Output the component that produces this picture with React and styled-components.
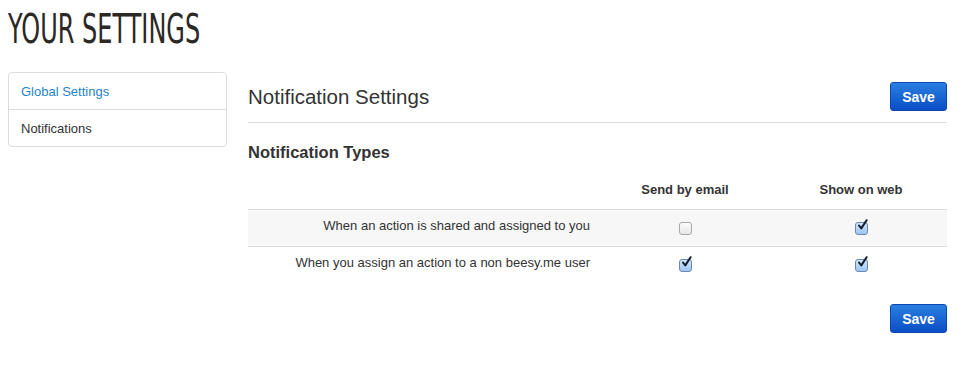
import styled, { createGlobalStyle } from 'styled-components';

const COLORS = {
  text: '#333',
  link: '#1f84c8',
  border: '#dcdcdc',
  rowBg: '#f7f7f7',
  btnTop: '#2a7fe0',
  btnBottom: '#0b4ec5'
};

const GlobalStyle = createGlobalStyle`
  body {
    margin: 0;
    background: #fff;
    font-family: 'Liberation Sans', Arial, sans-serif;
    color: ${COLORS.text};
  }
`;

const ROWS = [
  { label: 'When an action is shared and assigned to you', email: false, web: true },
  { label: 'When you assign an action to a non beesy.me user', email: true, web: true }
];

function Checkbox({ checked }) {
  return (
    <Box checked={checked}>
      {checked && (
        <svg width="13" height="13" viewBox="0 0 13 13">
          <path
            d="M3 6.5 L5.3 9.4 L10.6 1.2"
            fill="none"
            stroke="#111a2e"
            strokeWidth="2"
            strokeLinecap="round"
            strokeLinejoin="round"
          />
        </svg>
      )}
    </Box>
  );
}

export default function App() {
  return (
    <Page>
      <GlobalStyle />
      <PageTitle>YOUR SETTINGS</PageTitle>
      <Layout>
        <Sidebar>
          <SideItem active>Global Settings</SideItem>
          <SideItem>Notifications</SideItem>
        </Sidebar>

        <Main>
          <Header>
            <SectionTitle>Notification Settings</SectionTitle>
            <SaveButton>Save</SaveButton>
          </Header>

          <SubTitle>Notification Types</SubTitle>

          <Table>
            <HeadRow>
              <span />
              <HeadCell>Send by email</HeadCell>
              <HeadCell>Show on web</HeadCell>
            </HeadRow>
            {ROWS.map((row, i) => (
              <Row key={row.label} striped={i === 0}>
                <Label>{row.label}</Label>
                <Cell>
                  <Checkbox checked={row.email} />
                </Cell>
                <Cell>
                  <Checkbox checked={row.web} />
                </Cell>
              </Row>
            ))}
          </Table>

          <Footer>
            <SaveButton>Save</SaveButton>
          </Footer>
        </Main>
      </Layout>
    </Page>
  );
}

const Page = styled.div`
  padding: 0 32px 0 8px;
  width: 979px;
  box-sizing: border-box;
`;

const PageTitle = styled.h1`
  margin: 0;
  padding-top: 8px;
  height: 72px;
  font-family: 'DejaVu Sans', sans-serif;
  font-weight: normal;
  font-size: 41px;
  line-height: 42px;
  color: #2b2825;
  transform: scaleX(0.585);
  transform-origin: left;
  box-sizing: border-box;
  white-space: nowrap;
`;

const Layout = styled.div`
  display: flex;
  gap: 21px;
  align-items: flex-start;
`;

const Sidebar = styled.nav`
  width: 219px;
  flex-shrink: 0;
  border: 1px solid ${COLORS.border};
  border-radius: 4px;
  box-sizing: border-box;
`;

const SideItem = styled.div`
  height: 36px;
  padding: 0 12px;
  display: flex;
  align-items: center;
  font-size: 13px;
  color: ${({ active }) => (active ? COLORS.link : COLORS.text)};

  & + & {
    border-top: 1px solid ${COLORS.border};
  }
`;

const Main = styled.div`
  flex: 1;
  padding-top: 10px;
`;

const Header = styled.div`
  display: flex;
  justify-content: space-between;
  align-items: center;
  padding-bottom: 11px;
  border-bottom: 1px solid ${COLORS.border};
`;

const SectionTitle = styled.h2`
  margin: 0;
  font-size: 20.5px;
  font-weight: normal;
  color: #333;
`;

const SaveButton = styled.button`
  width: 57px;
  height: 29px;
  border: 1px solid #0a47b5;
  border-radius: 3px;
  background: linear-gradient(${COLORS.btnTop}, ${COLORS.btnBottom});
  color: #fff;
  font-family: 'Liberation Sans', Arial, sans-serif;
  font-weight: bold;
  font-size: 14px;
  cursor: pointer;
`;

const SubTitle = styled.h3`
  margin: 20px 0 0;
  font-size: 16.5px;
  font-weight: bold;
  color: #333;
`;

const Table = styled.div`
  margin-top: 18px;
`;

const gridCols = `
  display: grid;
  grid-template-columns: 1fr 180px 172px;
  align-items: center;
`;

const HeadRow = styled.div`
  ${gridCols}
  height: 29px;
  align-items: start;
`;

const HeadCell = styled.div`
  text-align: center;
  font-size: 13px;
  font-weight: bold;
  padding-top: 2px;
`;

const Row = styled.div`
  ${gridCols}
  height: 36px;
  border-top: 1px solid ${COLORS.border};
  background: ${({ striped }) => (striped ? COLORS.rowBg : '#fff')};
`;

const Label = styled.div`
  text-align: right;
  padding-right: 5px;
  font-size: 13px;
  padding-bottom: 5px;
`;

const Cell = styled.div`
  display: flex;
  justify-content: center;
`;

const Box = styled.span`
  position: relative;
  width: 11px;
  height: 11px;
  border-radius: 3px;
  border: 1px solid ${({ checked }) => (checked ? '#6b88b0' : '#a8a8a8')};
  background: ${({ checked }) =>
    checked
      ? 'linear-gradient(#d4e6fb, #9cc6f3)'
      : 'linear-gradient(#fdfdfd, #e6e6e6)'};

  svg {
    position: absolute;
    left: 0;
    top: -4px;
  }
`;

const Footer = styled.div`
  display: flex;
  justify-content: flex-end;
  padding-top: 21px;
`;
